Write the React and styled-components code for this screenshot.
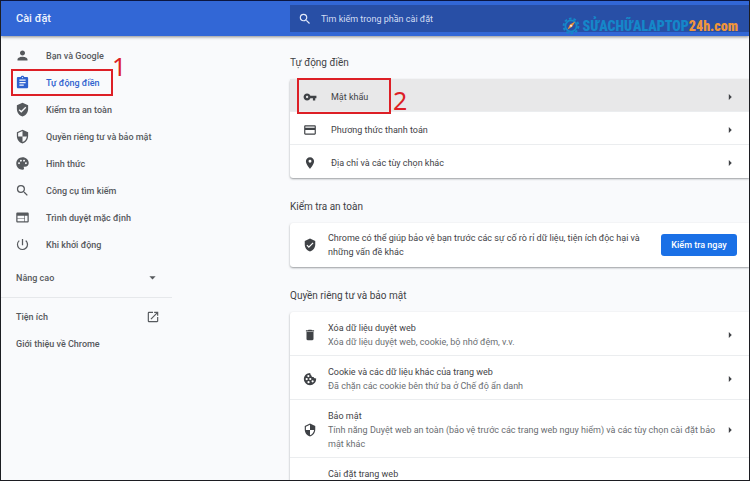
import React from "react";
import styled, { createGlobalStyle } from "styled-components";
import {
  MdPerson,
  MdAssignment,
  MdVerifiedUser,
  MdSecurity,
  MdPalette,
  MdSearch,
  MdWeb,
  MdPowerSettingsNew,
  MdArrowDropDown,
  MdOpenInNew,
  MdVpnKey,
  MdCreditCard,
  MdLocationOn,
  MdDelete,
  MdArrowRight,
} from "react-icons/md";

const GlobalStyle = createGlobalStyle`
  *, *::before, *::after { box-sizing: border-box; }
  body {
    margin: 0;
    background: #f9fafc;
    color: #3f4246;
    font-family: Roboto, "Noto Sans", sans-serif;
    font-size: 9px;
    line-height: 14px;
  }
  a { color: inherit; text-decoration: none; }
  button { font: inherit; color: inherit; border: 0; background: none; padding: 0; cursor: pointer; }
  h1, h2, p { margin: 0; font-weight: 400; }
  svg { flex: none; }
`;

const Page = styled.div`
  display: flex;
  flex-direction: column;
  height: 100vh;
  overflow: hidden;
  border: 1px solid #1c1d22;
  border-top-color: #0b1640;
`;

const columns = `
  display: grid;
  grid-template-columns: 289px minmax(0, 1fr);
`;

const Header = styled.header`
  ${columns}
  position: relative;
  flex: none;
  height: 35px;
  align-items: center;
  background: #3267d6;
  box-shadow: 0 1px 3px rgba(0, 0, 0, 0.45);
`;

const Title = styled.h1`
  padding-left: 15px;
  color: #eef3fd;
  font-size: 11px;
  font-weight: 500;
`;

const SearchField = styled.label`
  display: flex;
  align-items: center;
  gap: 9px;
  height: 27px;
  padding-left: 8px;
  background: #284fa6;
  color: #e3eafa;
`;

const SearchInput = styled.input`
  flex: 1;
  min-width: 0;
  padding: 0;
  border: 0;
  outline: 0;
  background: transparent;
  color: inherit;
  font: inherit;
  &::placeholder { color: #d3def4; opacity: 1; }
`;

const Watermark = styled.div`
  position: absolute;
  right: 11px;
  bottom: 0;
  display: flex;
  align-items: center;
  gap: 3px;
  color: #1587c9;
  font-family: Impact, "Roboto Condensed", "Open Sans Condensed", Roboto, sans-serif;
  font-size: 14px;
  font-weight: 900;
  line-height: 20px;
`;

const Orange = styled.span`
  color: #f0953a;
`;

const Body = styled.div`
  ${columns}
  flex: 1;
  min-height: 0;
`;

const Sidebar = styled.aside`
  width: 171px;
  padding-top: 6px;
  color: #56595d;
  font-weight: 500;
`;

const Nav = styled.nav`
  display: flex;
  flex-direction: column;
`;

const NavLink = styled.a`
  position: relative;
  display: flex;
  align-items: center;
  gap: 16px;
  height: 27px;
  padding-left: 14px;
  color: ${(p) => (p.$active ? "#2f62cf" : "inherit")};
`;

const Advanced = styled.button`
  display: flex;
  align-items: center;
  justify-content: space-between;
  width: 100%;
  height: 40px;
  padding: 0 12px 0 15px;
  border-bottom: 1px solid #e6e8eb;
  font-weight: 500;
`;

const FooterNav = styled(Nav)`
  padding-top: 5px;
`;

const FooterLink = styled.a`
  display: flex;
  align-items: center;
  justify-content: space-between;
  height: 27px;
  padding: 0 12px 0 15px;
`;

const Main = styled.main`
  display: flex;
  flex-direction: column;
`;

const Heading = styled.h2`
  padding: ${(p) => (p.$first ? "20px 0 9px" : "22px 0 9px")};
  font-size: 10px;
`;

const Card = styled.div`
  border-radius: 3px 0 0 3px;
  background: #fff;
  box-shadow: 0 1px 2px rgba(60, 64, 67, 0.5);
`;

const Row = styled.a`
  position: relative;
  display: flex;
  align-items: center;
  min-height: 33px;
  padding: 9px 12px 6px 13px;
  border-bottom: 1px solid #ebedef;
  background: ${(p) => (p.$active ? "#e8e8e9" : "transparent")};
  &:last-child { border-bottom-color: transparent; }
`;

const TitleRow = styled(Row)`
  align-items: flex-start;
  padding-left: 38px;
`;

const SafetyRow = styled.div`
  display: flex;
  align-items: center;
  padding: 8px 12px 8px 13px;
`;

const RowText = styled.div`
  flex: 1;
  min-width: 0;
  margin-left: ${(p) => (p.$inset ? "14px" : "11px")};
`;

const Detail = styled.p`
  max-width: 388px;
  color: #6a6d71;
`;

const CheckButton = styled.button`
  flex: none;
  width: 76px;
  height: 22px;
  border-radius: 3px;
  background: #1a70e6;
  color: #fff;
  font-weight: 500;
`;

const Mark = styled.span`
  position: absolute;
  z-index: 1;
  border: 2px solid #dd1f26;
  pointer-events: none;
  inset: ${(p) => p.$inset};
  width: ${(p) => p.$width};
`;

const MarkNumber = styled.span`
  position: absolute;
  z-index: 1;
  left: 100%;
  bottom: ${(p) => p.$bottom};
  margin-left: ${(p) => p.$gap};
  color: #dd1f26;
  font-family: "Noto Sans", sans-serif;
  font-size: 25px;
  font-weight: 400;
  line-height: 26px;
`;

const navItems = [
  { icon: MdPerson, label: "Bạn và Google" },
  { icon: MdAssignment, label: "Tự động điền", active: true },
  { icon: MdVerifiedUser, label: "Kiểm tra an toàn" },
  { icon: MdSecurity, label: "Quyền riêng tư và bảo mật" },
  { icon: MdPalette, label: "Hình thức" },
  { icon: MdSearch, label: "Công cụ tìm kiếm" },
  { icon: MdWeb, label: "Trình duyệt mặc định" },
  { icon: MdPowerSettingsNew, label: "Khi khởi động" },
];

function CookieIcon({ size }) {
  return (
    <svg width={size} height={size} viewBox="0 0 24 24" aria-hidden="true">
      <path
        fill="currentColor"
        d="M12.5 1.5C6 1.5 1.5 6.4 1.5 12S6.2 22.5 12 22.5 22.5 17.8 22.5 12c0-.5 0-.8-.1-1.2-1.8.8-3.9-.2-4.3-2.1-2.3.2-4.2-1.5-4-3.7-1.2-.6-1.8-2-1.6-3.5Z"
      />
      <g fill="#fff">
        <circle cx="9.2" cy="7" r="1.9" />
        <circle cx="6.3" cy="12.2" r="1.9" />
        <circle cx="12.5" cy="12" r="1.9" />
        <circle cx="9.5" cy="17.5" r="1.9" />
        <circle cx="16.5" cy="16" r="1.9" />
      </g>
    </svg>
  );
}

const autofillItems = [
  { icon: MdVpnKey, label: "Mật khẩu", active: true },
  { icon: MdCreditCard, label: "Phương thức thanh toán" },
  { icon: MdLocationOn, label: "Địa chỉ và các tùy chọn khác" },
];

const privacyItems = [
  { icon: MdDelete, label: "Xóa dữ liệu duyệt web", detail: "Xóa dữ liệu duyệt web, cookie, bộ nhớ đệm, v.v." },
  { icon: CookieIcon, label: "Cookie và các dữ liệu khác của trang web", detail: "Đã chặn các cookie bên thứ ba ở Chế độ ẩn danh" },
  {
    icon: MdSecurity,
    label: "Bảo mật",
    detail: "Tính năng Duyệt web an toàn (bảo vệ trước các trang web nguy hiểm) và các tùy chọn cài đặt bảo mật khác",
  },
];

function GearLogo() {
  return (
    <svg width="18" height="18" viewBox="0 0 18 18" aria-hidden="true">
      <circle cx="9" cy="9" r="7.4" fill="none" stroke="#1587c9" strokeWidth="2" strokeDasharray="2.6 2.05" />
      <circle cx="9" cy="9" r="5.6" fill="none" stroke="#1587c9" strokeWidth="1.8" />
      <path d="M5.5 12.5 8 7.4 13.2 4.6 10.2 9.8Z" fill="#f0953a" />
      <circle cx="9" cy="8.8" r="0.9" fill="#fff" />
    </svg>
  );
}

function SettingsRow({ icon: Icon, label, detail, active }) {
  return (
    <Row href="#" $active={active}>
      <Icon size={14} />
      <RowText $inset={!detail}>
        <p>{label}</p>
        {detail && <Detail>{detail}</Detail>}
      </RowText>
      <MdArrowRight size={14} />
      {active && (
        <Mark $inset="-1px auto -3px 7px" $width="94px">
          <MarkNumber $bottom="-1px" $gap="4px">2</MarkNumber>
        </Mark>
      )}
    </Row>
  );
}

export default function App() {
  return (
    <Page>
      <GlobalStyle />
      <Header>
        <Title>Cài đặt</Title>
        <SearchField>
          <MdSearch size={14} />
          <SearchInput type="search" aria-label="Tìm kiếm trong phần cài đặt" placeholder="Tìm kiếm trong phần cài đặt" />
        </SearchField>
        <Watermark>
          <GearLogo />
          <span>
            SỬACHỮALAPTOP<Orange>24h.com</Orange>
          </span>
        </Watermark>
      </Header>
      <Body>
        <Sidebar>
          <Nav>
            {navItems.map(({ icon: Icon, label, active }) => (
              <NavLink key={label} href="#" $active={active}>
                <Icon size={15} />
                {label}
                {active && (
                  <Mark $inset="0 auto 0 10px" $width="102px">
                    <MarkNumber $bottom="15px" $gap="1px">1</MarkNumber>
                  </Mark>
                )}
              </NavLink>
            ))}
          </Nav>
          <Advanced type="button">
            Nâng cao
            <MdArrowDropDown size={15} />
          </Advanced>
          <FooterNav>
            <FooterLink href="#">
              Tiện ích
              <MdOpenInNew size={14} />
            </FooterLink>
            <FooterLink href="#">Giới thiệu về Chrome</FooterLink>
          </FooterNav>
        </Sidebar>
        <Main>
          <Heading $first>Tự động điền</Heading>
          <Card>
            {autofillItems.map((item) => (
              <SettingsRow key={item.label} {...item} />
            ))}
          </Card>
          <Heading>Kiểm tra an toàn</Heading>
          <Card>
            <SafetyRow>
              <MdVerifiedUser size={14} />
              <RowText>
                Chrome có thể giúp bảo vệ bạn trước các sự cố rò rỉ dữ liệu, tiện ích độc hại và những vấn đề khác
              </RowText>
              <CheckButton type="button">Kiểm tra ngay</CheckButton>
            </SafetyRow>
          </Card>
          <Heading>Quyền riêng tư và bảo mật</Heading>
          <Card>
            {privacyItems.map((item) => (
              <SettingsRow key={item.label} {...item} />
            ))}
            <TitleRow href="#">Cài đặt trang web</TitleRow>
          </Card>
        </Main>
      </Body>
    </Page>
  );
}
